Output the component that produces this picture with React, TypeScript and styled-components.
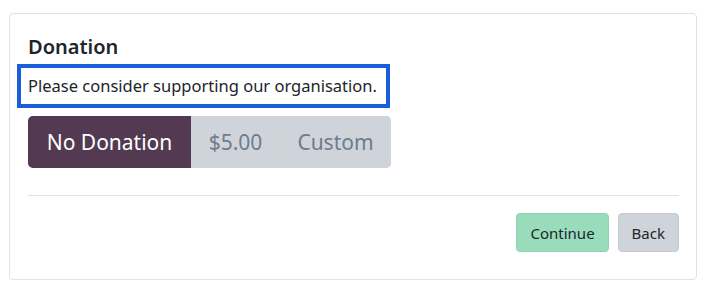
import React from "react";
import styled, { createGlobalStyle } from "styled-components";

const Global = createGlobalStyle`
  html, body { margin: 0; padding: 0; background: #ffffff; }
  body { font-family: "Noto Sans", "Open Sans", sans-serif; color: #212529; }
`;

const Page = styled.div`
  padding: 13px 8px 6px 9px;
`;

const Card = styled.section`
  box-sizing: border-box;
  height: 267px;
  border: 1px solid #dfe2e6;
  border-radius: 4px;
  padding: 19px 17px 26px 18px;
  display: flex;
  flex-direction: column;
`;

const Title = styled.h2`
  margin: 0 0 3px 0;
  font-size: 20px;
  line-height: 28px;
  font-weight: 600;
  color: #212529;
`;

const Highlight = styled.div`
  align-self: flex-start;
  margin-left: -11px;
  border: 4px solid #1b5edb;
  padding: 4px 9px 4px 7px;
`;

const Lead = styled.p`
  margin: 0;
  font-size: 16.5px;
  line-height: 28px;
  color: #212529;
`;

const Group = styled.div`
  display: flex;
  align-self: flex-start;
  margin-top: 8px;
  height: 52px;
  border-radius: 5px;
  overflow: hidden;
  background: #cfd4da;
`;

const Choice = styled.button<{ $active?: boolean; $w: number }>`
  border: none;
  margin: 0;
  width: ${(p) => p.$w}px;
  padding: 0;
  font-family: inherit;
  font-size: 21px;
  background: ${(p) => (p.$active ? "#533a52" : "#cfd4da")};
  color: ${(p) => (p.$active ? "#ffffff" : "#6e7c8d")};
  cursor: pointer;
`;

const Divider = styled.hr`
  margin: 27px 0 17px 0;
  border: none;
  border-top: 1px solid #e1e3e6;
`;

const Actions = styled.div`
  display: flex;
  justify-content: flex-end;
  gap: 9px;
`;

const Btn = styled.button<{ $variant: "success" | "secondary" }>`
  height: 39px;
  padding: 0 13px;
  font-family: inherit;
  font-size: 15px;
  border-radius: 4px;
  color: #212529;
  border: 1px solid ${(p) => (p.$variant === "success" ? "#8cd6b3" : "#c6cbd1")};
  background: ${(p) => (p.$variant === "success" ? "#98dcbc" : "#cfd4da")};
  cursor: pointer;
`;

export default function App() {
  return (
    <>
      <Global />
      <Page>
        <Card>
          <Title>Donation</Title>
          <Highlight>
            <Lead>Please consider supporting our organisation.</Lead>
          </Highlight>
          <Group>
            <Choice $active $w={163}>No Donation</Choice>
            <Choice $w={89}>$5.00</Choice>
            <Choice $w={111}>Custom</Choice>
          </Group>
          <Divider />
          <Actions>
            <Btn $variant="success">Continue</Btn>
            <Btn $variant="secondary">Back</Btn>
          </Actions>
        </Card>
      </Page>
    </>
  );
}
